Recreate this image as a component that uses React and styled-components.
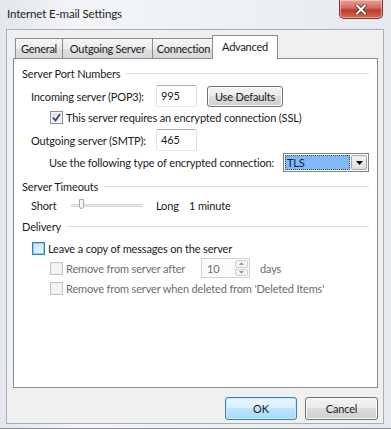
import React from "react";
import styled, { createGlobalStyle, css } from "styled-components";

const Global = createGlobalStyle`
  html, body { margin: 0; padding: 0; background: #fff; }
  body {
    font-family: Lato, "Noto Sans", sans-serif;
    font-size: 11px;
    letter-spacing: -0.15px;
    color: #1b1b1b;
    white-space: nowrap;
  }
  * { box-sizing: border-box; }
`;

const Window = styled.div`
  width: 391px;
  height: 429px;
  display: flex;
  flex-direction: column;
  padding: 0 7px 4px 6px;
  background: linear-gradient(90deg, #e4e7eb 0%, #f3f5f7 20%, #eef1f4 60%, #e6e9ed 100%);
  border-bottom: 1px solid #8c9096;
`;

const TitleBar = styled.div`
  height: 29px;
  display: flex;
  align-items: flex-start;
  justify-content: space-between;
`;

const Title = styled.div`
  margin-top: 7px;
  margin-left: 1px;
  font-size: 11.5px;
  color: #1e1e1e;
`;

const CloseBtn = styled.div`
  width: 44px;
  height: 19px;
  margin-right: 1px;
  border: 1px solid #7a3535;
  border-top: none;
  border-radius: 0 0 5px 5px;
  background: linear-gradient(#e8a59c 0%, #d0695c 45%, #c0392b 55%, #d16a4f 100%);
  box-shadow: inset 0 0 0 1px rgba(255, 220, 210, 0.55);
  display: flex;
  align-items: center;
  justify-content: center;
`;

const Client = styled.div`
  flex: 1;
  display: flex;
  flex-direction: column;
  padding: 5px 6px 0 6px;
  background: #f0f0f0;
  border: 1px solid #a8aeb5;
`;

const TabRow = styled.div`
  display: flex;
  align-items: flex-end;
  height: 23px;
  padding-left: 2px;
  position: relative;
  z-index: 1;
  letter-spacing: -0.25px;
`;

const Tab = styled.div`
  height: 20px;
  width: ${(p) => p.$w}px;
  display: flex;
  align-items: center;
  justify-content: center;
  border: 1px solid #898c95;
  border-bottom: none;
  margin-right: -1px;
  background: linear-gradient(#f6f6f6 0%, #ebebeb 50%, #dedede 51%, #d9d9d9 100%);
  ${(p) =>
    p.$active &&
    css`
      height: 24px;
      margin: 0 -2px -1px -2px;
      padding-bottom: 3px;
      background: #fff;
      position: relative;
      z-index: 2;
    `}
`;

const Panel = styled.div`
  width: 365px;
  height: 330px;
  background: #fff;
  border: 1px solid #898c95;
  padding: 7px 8px 0 8px;
  display: flex;
  flex-direction: column;
`;

const Section = styled.div`
  display: flex;
  align-items: center;
  height: 15px;
  margin-top: ${(p) => p.$top || 0}px;
  &::after {
    content: "";
    flex: 1;
    margin-left: 6px;
    border-top: 1px solid #d5dfe5;
  }
`;

const Row = styled.div`
  display: flex;
  align-items: center;
  height: ${(p) => p.$h || 16}px;
  margin-top: ${(p) => p.$top || 0}px;
  padding-left: ${(p) => p.$indent || 0}px;
  color: ${(p) => (p.$disabled ? "#6d6d6d" : "inherit")};
`;

const Label = styled.span`
  width: ${(p) => (p.$w ? `${p.$w}px` : "auto")};
  flex-shrink: 0;
`;

const TextInput = styled.div`
  width: 41px;
  height: 22px;
  border: 1px solid #abadb3;
  border-left-color: #e2e3ea;
  border-right-color: #dbdfe6;
  border-bottom-color: #e3e9ef;
  border-radius: 2px;
  padding: 3px 0 0 4px;
  background: #fff;
`;

const Button = styled.div`
  height: ${(p) => p.$h || 23}px;
  width: ${(p) => p.$w}px;
  margin-left: ${(p) => p.$ml || 0}px;
  display: flex;
  align-items: center;
  justify-content: center;
  border: 1px solid #707070;
  border-radius: 3px;
  background: linear-gradient(#f2f2f2 0%, #ebebeb 49%, #dddddd 50%, #cfcfcf 100%);
  box-shadow: inset 0 0 0 1px #fcfcfc;
  ${(p) =>
    p.$default &&
    css`
      border-color: #3c7fb1;
      background: linear-gradient(#eaf6fd 0%, #d9f0fc 49%, #bee6fd 50%, #a7d9f5 100%);
      box-shadow: inset 0 0 0 1px #c8eafc;
    `}
`;

const Box = styled.span`
  width: 13px;
  height: 13px;
  flex-shrink: 0;
  margin-right: 3px;
  border: 1px solid ${(p) => (p.$disabled ? "#c4c4c4" : p.$hot ? "#3c7fb1" : "#8f8f8f")};
  background: ${(p) =>
    p.$disabled
      ? "#f4f4f4"
      : p.$hot
      ? "linear-gradient(135deg, #c6e6f8, #e9f6fd)"
      : "linear-gradient(135deg, #dcdcdc, #fbfbfb)"};
  box-shadow: inset 0 0 0 1px ${(p) => (p.$disabled ? "#efefef" : p.$hot ? "#8bcbee" : "#f2f2f2")};
  display: flex;
  align-items: center;
  justify-content: center;
`;

const Select = styled.div`
  width: 87px;
  height: 19px;
  border: 1px solid #7f8285;
  display: flex;
  padding: 1px;
  background: #fff;
`;

const SelectValue = styled.div`
  flex: 1;
  background: #80b9f5;
  outline: 1px dotted #2f4f80;
  outline-offset: -1px;
  padding-left: 2px;
  line-height: 15px;
  color: #0e2240;
`;

const DropBtn = styled.div`
  width: 16px;
  margin-left: 1px;
  border: 1px solid #a7a7a7;
  border-radius: 2px;
  background: linear-gradient(#f2f2f2, #dedede);
  display: flex;
  align-items: center;
  justify-content: center;
`;

const Track = styled.div`
  width: 72px;
  height: 3px;
  margin-right: 13px;
  border: 1px solid #d6d6d6;
  border-radius: 1px;
  background: #ececec;
  position: relative;
`;

const Thumb = styled.span`
  position: absolute;
  left: 7px;
  top: -6px;
  width: 5px;
  height: 10px;
  border: 1px solid #a9a9a9;
  border-radius: 0 0 3px 3px;
  background: #f5f5f5;
`;

const Spin = styled.div`
  width: 49px;
  height: 20px;
  margin-right: 10px;
  border: 1px solid #d2d2d2;
  display: flex;
  background: #fbfbfb;
`;

const SpinText = styled.div`
  flex: 1;
  padding: 3px 0 0 5px;
  color: #6d6d6d;
`;

const SpinBtns = styled.div`
  width: 15px;
  display: flex;
  flex-direction: column;
  gap: 1px;
  padding: 1px;
`;

const SpinBtn = styled.div`
  flex: 1;
  border: 1px solid #d0d0d0;
  border-radius: 2px;
  background: #f4f4f4;
  display: flex;
  align-items: center;
  justify-content: center;
`;

const Footer = styled.div`
  display: flex;
  justify-content: flex-end;
  gap: 8px;
  margin-top: 9px;
  width: 365px;
`;

const Check = () => (
  <svg width="9" height="9" viewBox="0 0 9 9">
    <path d="M1 4.5 L3.5 7.5 L8 1" fill="none" stroke="#2f4778" strokeWidth="1.8" />
  </svg>
);

const Tri = ({ up, color = "#000", w = 7 }) => (
  <svg width={w} height={w / 2 + 0.5} viewBox="0 0 7 4">
    <path d={up ? "M0 4 L3.5 0 L7 4 Z" : "M0 0 L7 0 L3.5 4 Z"} fill={color} />
  </svg>
);

export default function App() {
  return (
    <Window>
      <Global />
      <TitleBar>
        <Title>Internet E-mail Settings</Title>
        <CloseBtn>
          <svg width="12" height="11" viewBox="0 0 12 11">
            <path d="M2 1.5 L10 9.5 M10 1.5 L2 9.5" stroke="#5b2a26" strokeWidth="3.6" strokeLinecap="square" />
            <path d="M2 1.5 L10 9.5 M10 1.5 L2 9.5" stroke="#fff" strokeWidth="2" strokeLinecap="square" />
          </svg>
        </CloseBtn>
      </TitleBar>
      <Client>
        <TabRow>
          <Tab $w={48}>General</Tab>
          <Tab $w={91}>Outgoing Server</Tab>
          <Tab $w={63}>Connection</Tab>
          <Tab $w={66} $active>Advanced</Tab>
        </TabRow>
        <Panel>
          <Section>Server Port Numbers</Section>
          <Row $h={22} $top={4} $indent={9}>
            <Label $w={125}>Incoming server (POP3):</Label>
            <TextInput>995</TextInput>
            <Button $w={76} $h={21} $ml={10}>Use Defaults</Button>
          </Row>
          <Row $top={2} $indent={28}>
            <Box>
              <Check />
            </Box>
            This server requires an encrypted connection (SSL)
          </Row>
          <Row $h={22} $top={4} $indent={9}>
            <Label $w={125}>Outgoing server (SMTP):</Label>
            <TextInput>465</TextInput>
          </Row>
          <Row $h={19} $top={2} $indent={27}>
            <Label $w={234}>Use the following type of encrypted connection:</Label>
            <Select>
              <SelectValue>TLS</SelectValue>
              <DropBtn>
                <Tri />
              </DropBtn>
            </Select>
          </Row>
          <Section $top={7}>Server Timeouts</Section>
          <Row $top={3} $indent={9}>
            <Label $w={40}>Short</Label>
            <Track>
              <Thumb />
            </Track>
            <Label $w={33}>Long</Label>
            1 minute
          </Row>
          <Section $top={6}>Delivery</Section>
          <Row $top={6} $indent={10}>
            <Box $hot />
            Leave a copy of messages on the server
          </Row>
          <Row $h={20} $top={2} $indent={28} $disabled>
            <Box $disabled />
            <Label $w={135}>Remove from server after</Label>
            <Spin>
              <SpinText>10</SpinText>
              <SpinBtns>
                <SpinBtn>
                  <Tri up color="#9a9a9a" w={5} />
                </SpinBtn>
                <SpinBtn>
                  <Tri color="#9a9a9a" w={5} />
                </SpinBtn>
              </SpinBtns>
            </Spin>
            days
          </Row>
          <Row $top={2} $indent={28} $disabled>
            <Box $disabled />
            Remove from server when deleted from 'Deleted Items'
          </Row>
        </Panel>
        <Footer>
          <Button $w={72} $default>OK</Button>
          <Button $w={73}>Cancel</Button>
        </Footer>
      </Client>
    </Window>
  );
}
